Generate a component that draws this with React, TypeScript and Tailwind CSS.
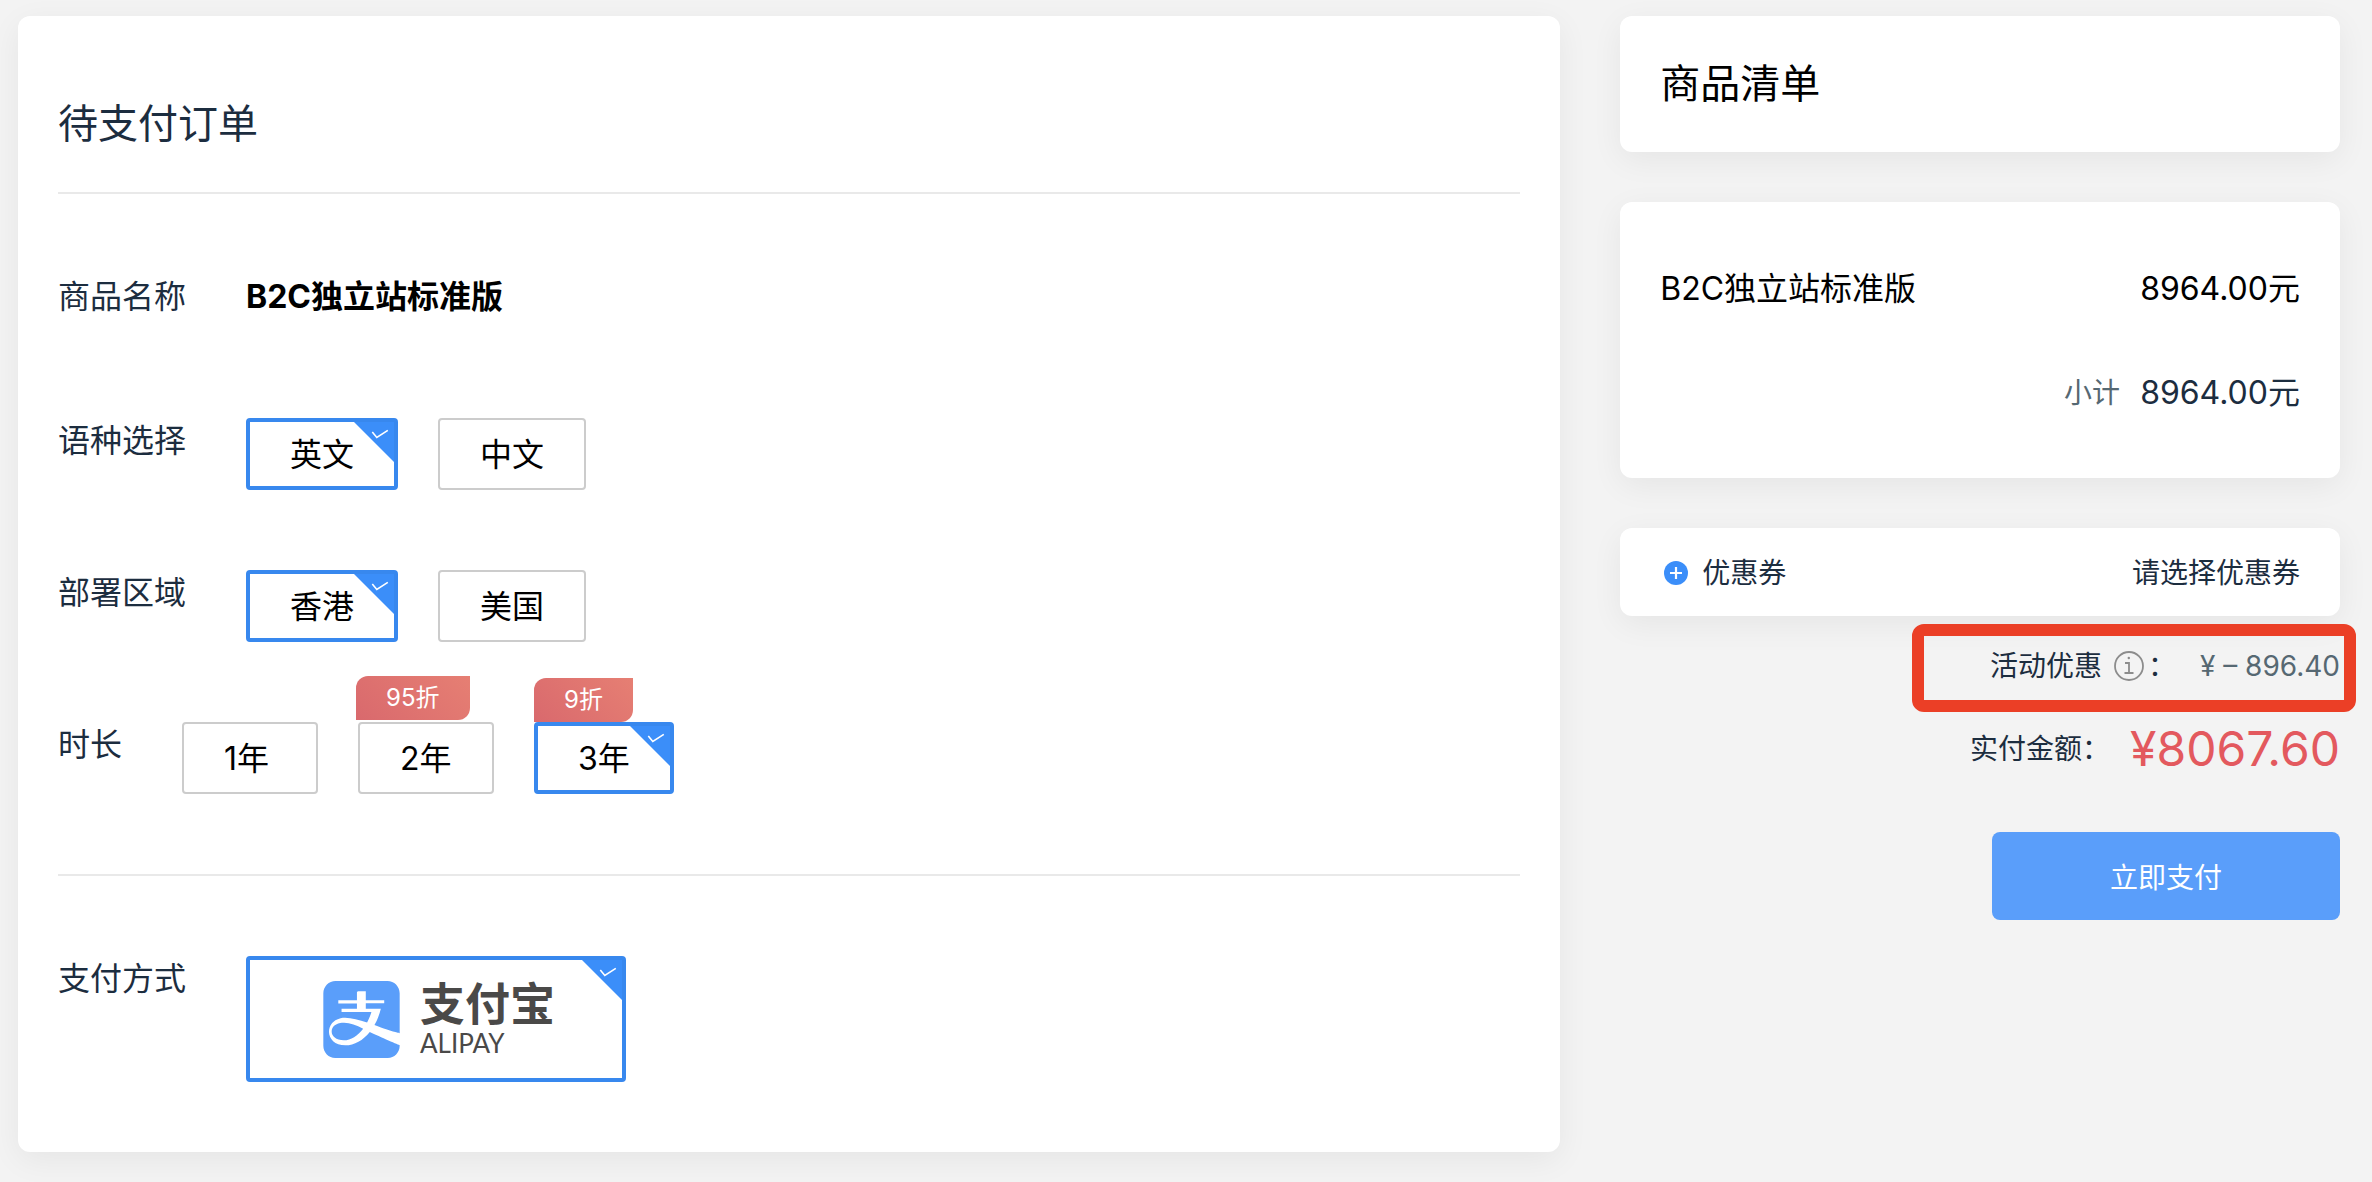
import { useState } from "react";
import type { ReactNode } from "react";
import clsx from "clsx";
import { SiAlipay } from "react-icons/si";

interface Option {
  value: string;
  label: string;
  discount?: string;
}

const languages: Option[] = [
  { value: "en", label: "英文" },
  { value: "zh", label: "中文" },
];

const regions: Option[] = [
  { value: "hk", label: "香港" },
  { value: "us", label: "美国" },
];

const durations: Option[] = [
  { value: "1", label: "1年" },
  { value: "2", label: "2年", discount: "95折" },
  { value: "3", label: "3年", discount: "9折" },
];

function CornerCheck() {
  return (
    <svg viewBox="0 0 40 40" className="absolute top-0 right-0 w-10 h-10" aria-hidden="true">
      <path d="M0 0H40V40Z" fill="#3b8ef9" />
      <path d="M18.3 10L22.8 15.5L33.8 8.3" fill="none" stroke="#fff" strokeWidth="1.6" />
    </svg>
  );
}

function Card({ className, children }: { className?: string; children: ReactNode }) {
  return (
    <section className={clsx("bg-white rounded-xl px-10 shadow-[0_8px_32px_rgba(0,0,0,0.06)]", className)}>
      {children}
    </section>
  );
}

interface OptionRowProps {
  name: string;
  title: string;
  options: Option[];
  value: string;
  onChange: (value: string) => void;
}

function OptionRow({ name, title, options, value, onChange }: OptionRowProps) {
  return (
    <div role="radiogroup" aria-labelledby={`${name}-title`} className="flex items-start gap-15">
      <span id={`${name}-title`} className="leading-[46px]">
        {title}
      </span>
      <div className="flex gap-10">
        {options.map((option) => {
          const checked = option.value === value;
          return (
            <label
              key={option.value}
              className={clsx(
                "relative flex items-center h-18 px-10 pt-0.5 rounded-sm text-black cursor-pointer",
                checked ? "min-w-[140px] border-4 border-[#3888ee]" : "min-w-[136px] border-2 border-[#cccccc]"
              )}
            >
              <input
                type="radio"
                name={name}
                value={option.value}
                checked={checked}
                onChange={() => onChange(option.value)}
                className="sr-only"
              />
              {option.label}
              {option.discount && (
                <span className="absolute -top-12 -left-1 px-[30px] rounded-tl-xl rounded-br-xl bg-linear-45 from-[#d9696d] to-[#e67f73] text-2xl leading-11 text-white whitespace-nowrap">
                  {option.discount}
                </span>
              )}
              {checked && <CornerCheck />}
            </label>
          );
        })}
      </div>
    </div>
  );
}

export default function App() {
  const [language, setLanguage] = useState("en");
  const [region, setRegion] = useState("hk");
  const [duration, setDuration] = useState("3");

  return (
    <div className="min-h-screen bg-[#f3f3f3] pt-4 pl-[18px] pr-8 pb-[30px] grid grid-cols-[15fr_7fr] gap-15 items-start font-[Inter,'Noto_Sans_CJK_SC',sans-serif] text-[32px] text-[#1c2d3f]">
      {/* Order form */}
      <Card className="pb-[70px]">
        <h1 className="pt-20 pb-10 border-b-2 border-[#e9e9e9] text-[40px] leading-14">待支付订单</h1>

        <div className="flex gap-15 pt-20 pb-[98px] leading-[46px]">
          <span>商品名称</span>
          <span className="font-bold text-black">B2C独立站标准版</span>
        </div>

        <div className="flex flex-col gap-20 pb-20 border-b-2 border-[#e9e9e9]">
          <OptionRow name="language" title="语种选择" options={languages} value={language} onChange={setLanguage} />
          <OptionRow name="region" title="部署区域" options={regions} value={region} onChange={setRegion} />
          <OptionRow name="duration" title="时长" options={durations} value={duration} onChange={setDuration} />
        </div>

        <div role="radiogroup" aria-labelledby="payment-title" className="flex items-start gap-15 pt-20">
          <span id="payment-title" className="leading-[46px]">
            支付方式
          </span>
          <label className="relative flex items-center gap-5 w-[380px] h-[126px] pl-[73px] border-4 border-[#3888ee] rounded-sm text-[#4a4948] whitespace-nowrap cursor-pointer">
            <input type="radio" name="payment" value="alipay" defaultChecked className="sr-only" />
            <SiAlipay className="shrink-0 w-[77px] h-[77px] text-[#5a9efa]" aria-hidden="true" />
            <span className="flex flex-col">
              <span className="text-[45px] leading-12 font-bold">支付宝</span>
              <span className="text-[26px] leading-7 font-[Lato,sans-serif]">ALIPAY</span>
            </span>
            <CornerCheck />
          </label>
        </div>
      </Card>

      {/* Summary */}
      <aside className="flex flex-col gap-[50px]">
        <Card className="py-10">
          <h2 className="text-[40px] leading-14 text-black">商品清单</h2>
        </Card>

        <Card className="flex flex-col gap-[58px] pt-16 pb-[62px] leading-[46px]">
          <div className="flex justify-between text-black">
            <span>B2C独立站标准版</span>
            <span>8964.00元</span>
          </div>
          <div className="flex justify-end gap-5">
            <span className="text-[28px] text-[#566872]">小计</span>
            <span>8964.00元</span>
          </div>
        </Card>

        <div className="flex flex-col items-end text-[28px]">
          <Card className="flex items-center justify-between w-full pt-6 pb-[22px] leading-[42px]">
            <span className="flex items-center">
              <svg viewBox="0 0 24 24" className="w-6 h-6 ml-1 mr-3.5" aria-hidden="true">
                <circle cx="12" cy="12" r="12" fill="#3b8ef9" />
                <path d="M12 6V18M6 12H18" stroke="#fff" strokeWidth="2.2" />
              </svg>
              优惠券
            </span>
            <button type="button" className="cursor-pointer">
              请选择优惠券
            </button>
          </Card>

          <div className="relative flex items-center gap-6 mt-7 leading-11">
            {/* Highlight around the promotion line */}
            <div className="absolute -top-5 -bottom-6 -left-[78px] -right-4 border-12 border-[#eb3f26] rounded-xl" />
            <span className="flex items-center">
              活动优惠
              <svg
                viewBox="0 0 30 30"
                className="w-[30px] h-[30px] ml-3 mr-1"
                fill="none"
                stroke="#8c8c8c"
                strokeWidth="1.8"
                aria-hidden="true"
              >
                <circle cx="15" cy="15" r="14" />
                <path d="M11 12H15V22M10.5 22H19.5" />
                <circle cx="14.8" cy="7" r="1.2" fill="#8c8c8c" stroke="none" />
              </svg>
              ：
            </span>
            <span className="text-[#566872]">¥ – 896.40</span>
          </div>

          <div className="flex items-center gap-5 mt-7 leading-[66px]">
            <span>实付金额：</span>
            <span className="text-5xl leading-16 text-[#e3595e]">¥8067.60</span>
          </div>

          <button
            type="button"
            className="mt-[50px] w-[348px] h-22 pt-1 rounded-lg bg-[#5a9efa] text-white cursor-pointer"
          >
            立即支付
          </button>
        </div>
      </aside>
    </div>
  );
}
